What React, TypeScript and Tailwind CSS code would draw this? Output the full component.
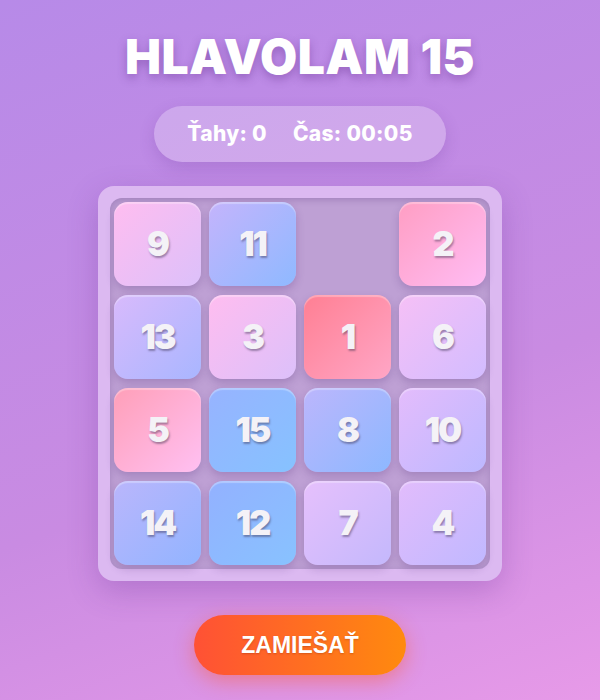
const tiles: { n: number | null; bg: string }[] = [
  { n: 9, bg: 'bg-[linear-gradient(135deg,#ffbdf0,#dcc0fa)]' },
  { n: 11, bg: 'bg-[linear-gradient(135deg,#c4b4fc,#8fb9ff)]' },
  { n: null, bg: '' },
  { n: 2, bg: 'bg-[linear-gradient(135deg,#ff9ec3,#ffbcf4)]' },
  { n: 13, bg: 'bg-[linear-gradient(135deg,#d8bafc,#a9b6ff)]' },
  { n: 3, bg: 'bg-[linear-gradient(135deg,#ffbdf0,#dcc0fa)]' },
  { n: 1, bg: 'bg-[linear-gradient(135deg,#ff7f93,#ffa6c6)]' },
  { n: 6, bg: 'bg-[linear-gradient(135deg,#f6c0f6,#d2bcff)]' },
  { n: 5, bg: 'bg-[linear-gradient(135deg,#ff9fb8,#ffc0f2)]' },
  { n: 15, bg: 'bg-[linear-gradient(135deg,#97b3ff,#86c2ff)]' },
  { n: 8, bg: 'bg-[linear-gradient(135deg,#bcb6fc,#8db8ff)]' },
  { n: 10, bg: 'bg-[linear-gradient(135deg,#e4bcfc,#bcb8ff)]' },
  { n: 14, bg: 'bg-[linear-gradient(135deg,#bab6fc,#92b4ff)]' },
  { n: 12, bg: 'bg-[linear-gradient(135deg,#93b1ff,#88c2ff)]' },
  { n: 7, bg: 'bg-[linear-gradient(135deg,#e6c0fc,#c4b8fc)]' },
  { n: 4, bg: 'bg-[linear-gradient(135deg,#e2bcfc,#c0b8ff)]' },
];

export default function App() {
  return (
    <div className="min-h-[700px] w-full flex flex-col items-center bg-[linear-gradient(160deg,#b78ae8_0%,#c98be2_60%,#e79ae8_100%)] font-['Inter','Liberation_Sans',sans-serif]">
      {/* titulok */}
      <h1 className="mt-[31px] text-[48px] leading-[52px] font-black text-white tracking-[0.5px] [text-shadow:0_4px_10px_rgba(80,30,120,0.35)]">
        HLAVOLAM 15
      </h1>

      {/* stav hry */}
      <div className="mt-[23px] w-[292px] h-[56px] rounded-full bg-white/25 shadow-[0_6px_16px_rgba(90,40,140,0.18)] flex items-center justify-center gap-[26px] text-[21px] font-extrabold text-white tracking-[0.3px]">
        <span>Ťahy: 0</span>
        <span>Čas: 00:05</span>
      </div>

      {/* hracia plocha */}
      <div className="mt-[24px] p-3 rounded-2xl bg-[#dcb9f1] shadow-[0_10px_30px_rgba(90,40,140,0.25)]">
        <div className="p-1 rounded-xl bg-[#bea0d4] shadow-[inset_0_2px_6px_rgba(80,40,120,0.25)] grid grid-cols-[repeat(4,87px)] grid-rows-[repeat(4,84px)] gap-x-2 gap-y-[9px]">
          {tiles.map((t, i) =>
            t.n === null ? (
              <div key={i} />
            ) : (
              <div
                key={i}
                className={`${t.bg} rounded-[14px] flex items-center justify-center shadow-[0_4px_8px_rgba(70,30,110,0.22),inset_0_2px_1px_rgba(255,255,255,0.3)]`}
              >
                <span className="text-[34px] leading-none font-black text-[#f4f2f7] tracking-[-2px] [text-shadow:1px_2px_2px_rgba(60,50,80,0.45)]">
                  {t.n}
                </span>
              </div>
            )
          )}
        </div>
      </div>

      {/* tlačidlo */}
      <button className="mt-[34px] w-[212px] h-[60px] rounded-full bg-[linear-gradient(90deg,#ff5135,#ff8a0e)] shadow-[0_6px_20px_rgba(255,90,40,0.45)] text-white text-[23px] font-bold font-['Liberation_Sans',sans-serif] [text-shadow:0_1px_2px_rgba(120,30,0,0.3)]">
        ZAMIEŠAŤ
      </button>
    </div>
  );
}
